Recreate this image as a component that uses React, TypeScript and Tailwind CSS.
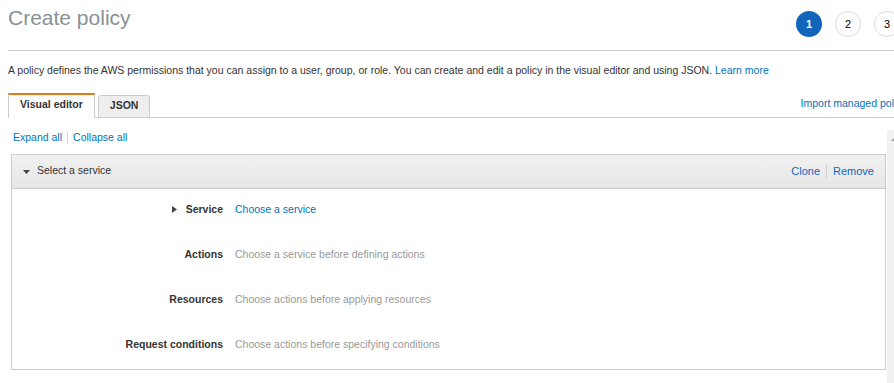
import React from 'react';

const font = { fontFamily: '"Liberation Sans", Arial, sans-serif' };

function Step({ n, active }: { n: number; active?: boolean }) {
  return (
    <div
      className={
        active
          ? 'w-[26px] h-[26px] rounded-full bg-[#1166bb] text-white flex items-center justify-center text-[11px] font-bold shrink-0'
          : 'w-[26px] h-[26px] rounded-full border border-[#d9dcdc] bg-white text-black flex items-center justify-center text-[11px] shrink-0'
      }
    >
      {n}
    </div>
  );
}

function Row({ label, children, caret }: { label: string; children: React.ReactNode; caret?: boolean }) {
  return (
    <div className="flex items-center h-[45px] pb-[3px]">
      <div className="w-[211px] flex items-center justify-end gap-[9px] text-[10.5px] font-bold text-[#333]">
        {caret && (
          <svg width="5" height="7" viewBox="0 0 5 7" className="mb-px">
            <path d="M0 0 L5 3.5 L0 7 Z" fill="#444" />
          </svg>
        )}
        <span>{label}</span>
      </div>
      <div className="pl-[12px] text-[10.5px]">{children}</div>
    </div>
  );
}

export default function App() {
  return (
    <div className="w-[894px] h-[383px] overflow-hidden bg-white" style={font}>
      {/* page header */}
      <div className="w-[912px] pl-2">
        <div className="flex items-start h-[51px] border-b border-[#cccccc]">
          <h1 className="pt-[6px] text-[21px] leading-[24px] text-[#879196]">Create policy</h1>
          <div className="ml-auto mt-[11px] mr-[12px] flex gap-[13px]">
            <Step n={1} active />
            <Step n={2} />
            <Step n={3} />
          </div>
        </div>
      </div>

      <p className="pl-2 pt-[12px] text-[10.5px] leading-[14px] text-[#333] whitespace-nowrap">
        A policy defines the AWS permissions that you can assign to a user, group, or role. You can create and edit a
        policy in the visual editor and using JSON. <span className="text-[#0073bb]">Learn more</span>
      </p>

      {/* tabs */}
      <div className="w-[915px] pl-2 mt-[12px]">
        <div className="flex items-end border-b border-[#cccccc] h-[29px]">
          <div className="h-[25px] px-[11px] border-t-2 border-t-[#e47911] border-x border-x-[#cccccc] bg-white text-[10.5px] font-bold text-[#333] flex items-center -mb-px relative z-10 pb-[3px]">
            Visual editor
          </div>
          <div className="ml-[3px] h-[22px] px-[11px] pb-[2px] border-t border-x border-[#cccccc] rounded-t-[3px] bg-[#eeeeee] text-[10.5px] font-bold text-[#333] flex items-center">
            JSON
          </div>
          <a className="ml-auto self-center mb-[-2px] text-[10.5px] text-[#0073bb] whitespace-nowrap">Import managed policies</a>
        </div>
      </div>

      {/* editor area */}
      <div className="w-[904px] flex">
        <div className="flex-1 pl-[11px] pr-px">
          <div className="flex items-center h-[36px] pl-[2px] pt-[3px] text-[10.5px] text-[#0073bb]">
            <span>Expand all</span>
            <span className="mx-[5px] w-px h-[12px] bg-[#d5d5d5]" />
            <span>Collapse all</span>
          </div>

          <div className="border border-[#cccccc]">
            <div className="h-[34px] flex items-center pl-[11px] pr-[11px] pb-[1px] bg-gradient-to-b from-[#f1f1f1] to-[#e6e6e6] border-b border-[#cccccc] text-[10.5px]">
              <svg width="7" height="4" viewBox="0 0 7 4" className="mr-[7px] mt-px">
                <path d="M0 0 L7 0 L3.5 4 Z" fill="#444" />
              </svg>
              <span className="text-[#333]">Select a service</span>
              <div className="ml-auto flex items-center text-[11px] text-[#1166bb]">
                <span>Clone</span>
                <span className="mx-[6px] w-px h-[13px] bg-[#cfcfcf]" />
                <span>Remove</span>
              </div>
            </div>
            <div className="bg-white">
              <Row label="Service" caret>
                <span className="text-[#0073bb]">Choose a service</span>
              </Row>
              <Row label="Actions">
                <span className="text-[#999999]">Choose a service before defining actions</span>
              </Row>
              <Row label="Resources">
                <span className="text-[#999999]">Choose actions before applying resources</span>
              </Row>
              <Row label="Request conditions">
                <span className="text-[#999999]">Choose actions before specifying conditions</span>
              </Row>
            </div>
          </div>
        </div>
        {/* scrollbar strip */}
        <div className="w-[17px] h-[260px] mt-[12px] bg-[#f1f1f1] flex justify-start pl-[4px] pt-[8px]">
          <svg width="5" height="3" viewBox="0 0 5 3">
            <path d="M0 3 L2.5 0 L5 3 Z" fill="#a3a3a3" />
          </svg>
        </div>
      </div>
    </div>
  );
}
